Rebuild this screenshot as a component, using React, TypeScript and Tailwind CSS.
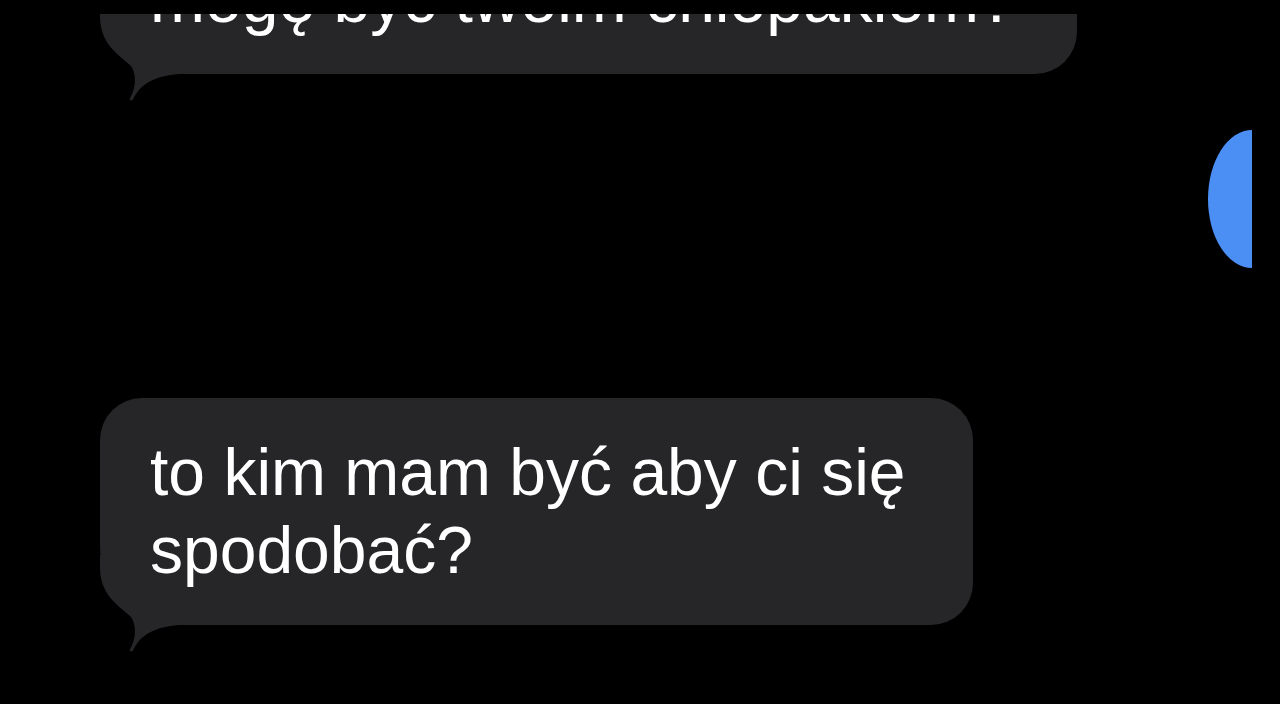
import React from "react";

const BUBBLE = "#262629";

// bottom-left tail of a received bubble, drawn over the body's corner
function Tail() {
  return (
    <svg
      className="absolute left-0 bottom-[-27px]"
      width="100"
      height="97"
      viewBox="0 -70 100 97"
    >
      <path
        d="M0 -70 L0 -58 C0 -30 18 -20 30 -9 C36 -3 37 13 30 24 C29 26.5 31 27 33 25.5 C38 15 48 2 80 0 L100 0 L100 -70 Z"
        fill={BUBBLE}
      />
    </svg>
  );
}

function Received({ width, children }: { width: string; children: React.ReactNode }) {
  return (
    <div className="pl-[100px]">
      <div
        className={`relative ${width} rounded-[42px] rounded-bl-[80px] bg-[#262629] pl-[50px] pr-[40px] pt-[35px] pb-[36px]`}
      >
        <Tail />
        <p className="relative text-[66px] leading-[78px] text-white font-['Liberation_Sans',Arial,sans-serif]">
          {children}
        </p>
      </div>
    </div>
  );
}

export default function App() {
  return (
    <div className="h-[704px] w-full bg-black overflow-hidden pt-[14px] pr-[28px]">
      <div className="h-full overflow-hidden">
        <div className="-mt-[89px] flex flex-col">
          <Received width="w-[977px]">mogę być twoim chłopakiem?</Received>

          <div className="mt-[56px] flex justify-end">
            <div className="w-[44px] h-[138px] rounded-l-[44px_69px] bg-[#4b8ff5]" />
          </div>

          <div className="mt-[130px]">
            <Received width="w-[873px]">to kim mam być aby ci się spodobać?</Received>
          </div>
        </div>
      </div>
    </div>
  );
}
